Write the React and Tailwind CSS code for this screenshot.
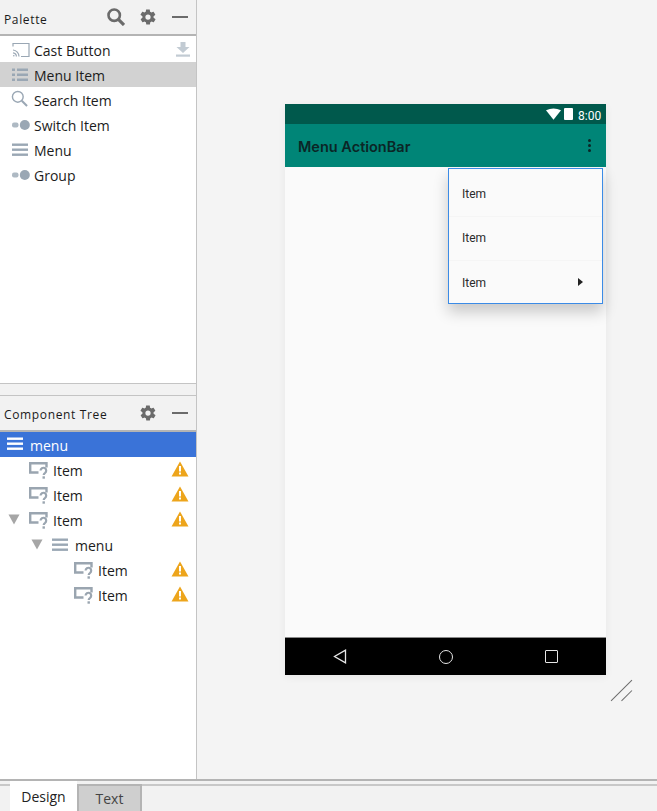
import React from 'react';

const SearchIcon = ({ className, w = 2 }) => (
  <svg viewBox="0 0 18 18" className={className} fill="none" stroke="currentColor" strokeWidth={w}>
    <circle cx="7.2" cy="7.2" r="5.7" />
    <path d="M11.4 11.4 L17 17" strokeWidth={w + 0.6} />
  </svg>
);

const GearIcon = () => (
  <svg viewBox="0 0 24 24" className="w-[18px] h-[18px] text-[#6b6b6b]" fill="currentColor">
    <path d="M19.4 13c.04-.33.06-.66.06-1s-.02-.67-.06-1l2.15-1.65c.2-.15.25-.42.13-.64l-2.05-3.5c-.12-.22-.39-.3-.62-.22l-2.53 1c-.53-.4-1.1-.73-1.72-.98L14.4 2.4c-.04-.24-.25-.4-.5-.4h-4c-.25 0-.46.16-.5.4l-.38 2.6c-.62.25-1.19.59-1.72.98l-2.53-1c-.23-.08-.5 0-.62.22l-2.05 3.5c-.13.22-.07.49.13.64L4.6 11c-.04.33-.07.67-.07 1s.03.67.07 1l-2.15 1.65c-.2.15-.25.42-.13.64l2.05 3.5c.12.22.39.3.62.22l2.53-1c.53.4 1.1.73 1.72.98l.38 2.6c.04.24.25.4.5.4h4c.25 0 .46-.16.5-.4l.38-2.6c.62-.25 1.19-.59 1.72-.98l2.53 1c.23.08.5 0 .62-.22l2.05-3.5c.12-.22.07-.49-.13-.64L19.4 13zM12 15.5a3.5 3.5 0 1 1 0-7 3.5 3.5 0 0 1 0 7z" />
  </svg>
);

const Minimize = () => <div className="w-[16px] h-[2.5px] bg-[#6b6b6b]" />;

const CastIcon = () => (
  <svg viewBox="0 0 18 16" className="w-[18px] h-[16px] text-[#9aa7b4]" fill="none" stroke="currentColor" strokeWidth="1.2">
    <path d="M1 4.5 V1.5 H17 V14.5 H9" />
    <path d="M1 8 a6.5 6.5 0 0 1 6 6.5 M1 10.8 a3.8 3.8 0 0 1 3.4 3.7" />
    <circle cx="1.8" cy="13.8" r="0.8" fill="currentColor" stroke="none" />
  </svg>
);

const ListIcon = () => (
  <svg viewBox="0 0 16 14" className="w-[16px] h-[14px] text-[#9aa7b4]" fill="currentColor">
    <rect x="0" y="0.5" width="3" height="2.5" /><rect x="5" y="0.5" width="11" height="2.5" />
    <rect x="0" y="5.5" width="3" height="2.5" /><rect x="5" y="5.5" width="11" height="2.5" />
    <rect x="0" y="10.5" width="3" height="2.5" /><rect x="5" y="10.5" width="11" height="2.5" />
  </svg>
);

const SwitchIcon = () => (
  <svg viewBox="0 0 18 10" className="w-[18px] h-[10px] text-[#9aa7b4]" fill="currentColor">
    <rect x="0" y="2.5" width="6.5" height="5" rx="2" opacity="0.8" />
    <circle cx="12.8" cy="5" r="5" />
  </svg>
);

const MenuIcon = ({ className = 'text-[#9aa7b4]' }) => (
  <svg viewBox="0 0 16 14" className={`w-[16px] h-[14px] ${className}`} fill="currentColor">
    <rect y="0.5" width="16" height="2.4" /><rect y="5.5" width="16" height="2.4" /><rect y="10.5" width="16" height="2.4" />
  </svg>
);

const UnknownIcon = () => (
  <svg viewBox="0 0 20 17" className="w-[20px] h-[17px] mt-[2px] text-[#9aa5b0]" fill="none" stroke="currentColor" strokeWidth="2.4">
    <path d="M9.5 10.5 H1.2 V1.2 H17.5 V5.5" />
    <path d="M11.6 8.6 a2.8 2.8 0 1 1 4.5 2.2 c-1 .7-1.4 1.1-1.4 2.2" strokeWidth="2.2" />
    <rect x="13.5" y="14.3" width="2.4" height="2.4" fill="currentColor" stroke="none" />
  </svg>
);

const Warning = () => (
  <svg viewBox="0 0 18 16" className="w-[18px] h-[16px] -mt-px">
    <path d="M9 0.5 L17.5 15.5 H0.5 Z" fill="#eda51c" />
    <rect x="8" y="5" width="2" height="5.5" fill="#fff" />
    <rect x="8" y="11.5" width="2" height="2" fill="#fff" />
  </svg>
);

const Arrow = () => (
  <svg viewBox="0 0 12 11" className="w-[12px] h-[11px] text-[#a6a6a6]" fill="currentColor">
    <path d="M0.5 0.5 H11.5 L6 10.5 Z" />
  </svg>
);

const paletteItems = [
  { label: 'Cast Button', icon: <CastIcon /> },
  { label: 'Menu Item', icon: <ListIcon />, selected: true },
  { label: 'Search Item', icon: <SearchIcon className="w-[17px] h-[17px] text-[#9aa7b4] -ml-px -mt-[2px]" w={1.5} /> },
  { label: 'Switch Item', icon: <SwitchIcon /> },
  { label: 'Menu', icon: <MenuIcon /> },
  { label: 'Group', icon: <SwitchIcon /> },
];

const treeItems = [
  { label: 'Item', pad: 'pl-[29px]' },
  { label: 'Item', pad: 'pl-[29px]' },
  { label: 'Item', pad: 'pl-[8px]', arrow: true },
  { label: 'menu', pad: 'pl-[31px]', arrow: true, menu: true },
  { label: 'Item', pad: 'pl-[74px]' },
  { label: 'Item', pad: 'pl-[74px]' },
];

const PanelHeader = ({ title, titleClass, children }) => (
  <div className="h-[36px] shrink-0 flex items-center justify-between pl-[4px] pr-[8px] bg-[#f2f2f2] border-b-2 border-[#b4b4b4]">
    <span className={`text-[12px] tracking-[0.65px] text-[#1a1a1a] ${titleClass}`}>{title}</span>
    <div className="flex items-center">{children}</div>
  </div>
);

const PopupRow = ({ arrow, border }) => (
  <div className={`h-[44.5px] flex items-center justify-between pl-[13px] pr-[19px] ${border ? 'border-b border-[#f5f5f5]' : ''}`}>
    <span className="font-['Roboto',sans-serif] text-[12px] text-[#2b2b2b]">Item</span>
    {arrow && (
      <svg viewBox="0 0 5 8" className="w-[5px] h-[8px] text-[#222] -mt-[3px]" fill="currentColor"><path d="M0 0 L5 4 L0 8 Z" /></svg>
    )}
  </div>
);

const App = () => {
  return (
    <div className="w-[657px] h-[811px] flex flex-col overflow-hidden bg-[#f4f4f4] font-['Open_Sans','Noto_Sans',sans-serif]">
      <div className="flex-1 min-h-0 flex">
        {/* left side panels */}
        <aside className="w-[197px] shrink-0 flex flex-col border-r border-[#c4c4c4]">
          <PanelHeader title="Palette" titleClass="mt-[5px]">
            <SearchIcon className="w-[18px] h-[18px] text-[#6b6b6b] mr-[14px]" w={2.6} />
            <div className="mr-[15px]"><GearIcon /></div>
            <Minimize />
          </PanelHeader>
          <div className="h-[347px] shrink-0 pt-px bg-white">
            {paletteItems.map((item, i) => (
              <div key={item.label} className={`h-[25px] flex items-center relative ${item.selected ? 'bg-[#d2d2d2]' : ''}`}>
                <div className="w-[34px] pl-[12px] flex items-center shrink-0">{item.icon}</div>
                <span className="text-[14px] text-[#1c1c1c] mt-[2px]">{item.label}</span>
                {i === 0 && (
                  <svg viewBox="0 0 14 15" className="w-[14px] h-[15px] ml-auto mr-[6px] text-[#c2cbd3]" fill="currentColor">
                    <path d="M4.5 0 H9.5 V5 H13.5 L7 11 L0.5 5 H4.5 Z" /><rect y="12.5" width="14" height="2.2" />
                  </svg>
                )}
              </div>
            ))}
          </div>
          <div className="h-[13px] shrink-0 bg-[#f2f2f2] border-y border-[#c4c4c4]" />
          <PanelHeader title="Component Tree" titleClass="mt-[3px]">
            <div className="mr-[15px]"><GearIcon /></div>
            <Minimize />
          </PanelHeader>
          <div className="flex-1 bg-white">
            <div className="h-[25px] flex items-center bg-[#3a73d8] pl-[7px]">
              <MenuIcon className="text-white -mt-[2px]" />
              <span className="ml-[7px] text-[14px] text-white mt-[2px]">menu</span>
            </div>
            {treeItems.map((item, i) => (
              <div key={i} className={`h-[25px] flex items-center pr-[7px] ${item.pad}`}>
                {item.arrow && <div className="mr-[9px]"><Arrow /></div>}
                {item.menu ? <MenuIcon /> : <UnknownIcon />}
                <span className={`text-[14px] text-[#1c1c1c] mt-[2px] ${item.menu ? 'ml-[7px]' : 'ml-[4px]'}`}>{item.label}</span>
                {!item.menu && <div className="ml-auto"><Warning /></div>}
              </div>
            ))}
          </div>
        </aside>

        {/* design canvas */}
        <main className="flex-1 pt-[104px] pl-[88px] relative">
          <div className="w-[321px] h-[571px] flex flex-col relative shadow-[0_2px_8px_rgba(0,0,0,0.06)]">
            <div className="h-[20px] shrink-0 bg-[#00594c] flex items-center pl-[261px]">
              <svg viewBox="0 0 16 12" className="w-[15px] h-[12px] text-white" fill="currentColor"><path d="M0 2 Q8 -2 16 2 L8 12 Z" /></svg>
              <div className="ml-[3px] w-[9px] h-[12px] bg-white rounded-[1px]" />
              <span className="ml-[5px] mt-[3px] font-['Roboto',sans-serif] text-[12px] leading-[16px] text-white">8:00</span>
            </div>
            <div className="h-[43px] shrink-0 bg-[#008577] flex items-center justify-between pl-[13px] pr-[15px]">
              <span className="mt-[2px] font-['Inter',sans-serif] text-[14.5px] font-semibold text-[#0b2626]">Menu ActionBar</span>
              <div className="flex flex-col gap-[2px]">
                <div className="w-[3px] h-[3px] rounded-full bg-[#0b2626]" />
                <div className="w-[3px] h-[3px] rounded-full bg-[#0b2626]" />
                <div className="w-[3px] h-[3px] rounded-full bg-[#0b2626]" />
              </div>
            </div>
            <div className="flex-1 bg-[#fafafa]" />
            <div className="h-[38px] shrink-0 bg-black border-t border-[#8a8a8a] flex items-center justify-between px-[48px]">
              <svg viewBox="0 0 14 15" className="w-[14px] h-[15px] text-[#e6e6e6]" fill="none" stroke="currentColor" strokeWidth="1.3"><path d="M12.5 1.2 V13.8 L1.5 7.5 Z" /></svg>
              <div className="w-[14px] h-[14px] rounded-full border-[1.5px] border-[#e6e6e6]" />
              <div className="w-[13px] h-[13px] rounded-[1px] border-[1.5px] border-[#e6e6e6]" />
            </div>
            {/* overflow popup */}
            <div className="absolute left-[163px] top-[64px] w-[155px] h-[136px] pt-[3px] bg-[#fafafa] border-[1.5px] border-[#3b8be6] shadow-[0_8px_14px_rgba(0,0,0,0.2)]">
              <PopupRow border />
              <PopupRow border />
              <PopupRow arrow />
            </div>
          </div>
          <svg viewBox="0 0 22 22" className="absolute left-[413px] top-[679px] w-[23px] h-[23px] text-[#6e6e6e]" fill="none" stroke="currentColor" strokeWidth="1">
            <path d="M1 21 L21 1 M11 21 L21 11" />
          </svg>
        </main>
      </div>

      {/* bottom tabs */}
      <div className="h-[32px] shrink-0 flex bg-[#f2f2f2] border-t-2 border-[#b4b4b4]">
        <div className="w-[10px] mt-[3px] border-t-2 border-[#c8c8c8]" />
        <div className="w-[67px] flex items-center justify-center bg-white text-[14px] text-[#222]">Design</div>
        <div className="w-[65px] mt-[3px] flex items-center justify-center bg-[#cfcfcf] border-x-2 border-t-2 border-[#b4b4b4] text-[14px] text-[#444]">Text</div>
        <div className="flex-1 mt-[3px] border-t-2 border-[#c8c8c8]" />
      </div>
    </div>
  );
};

export default App;
